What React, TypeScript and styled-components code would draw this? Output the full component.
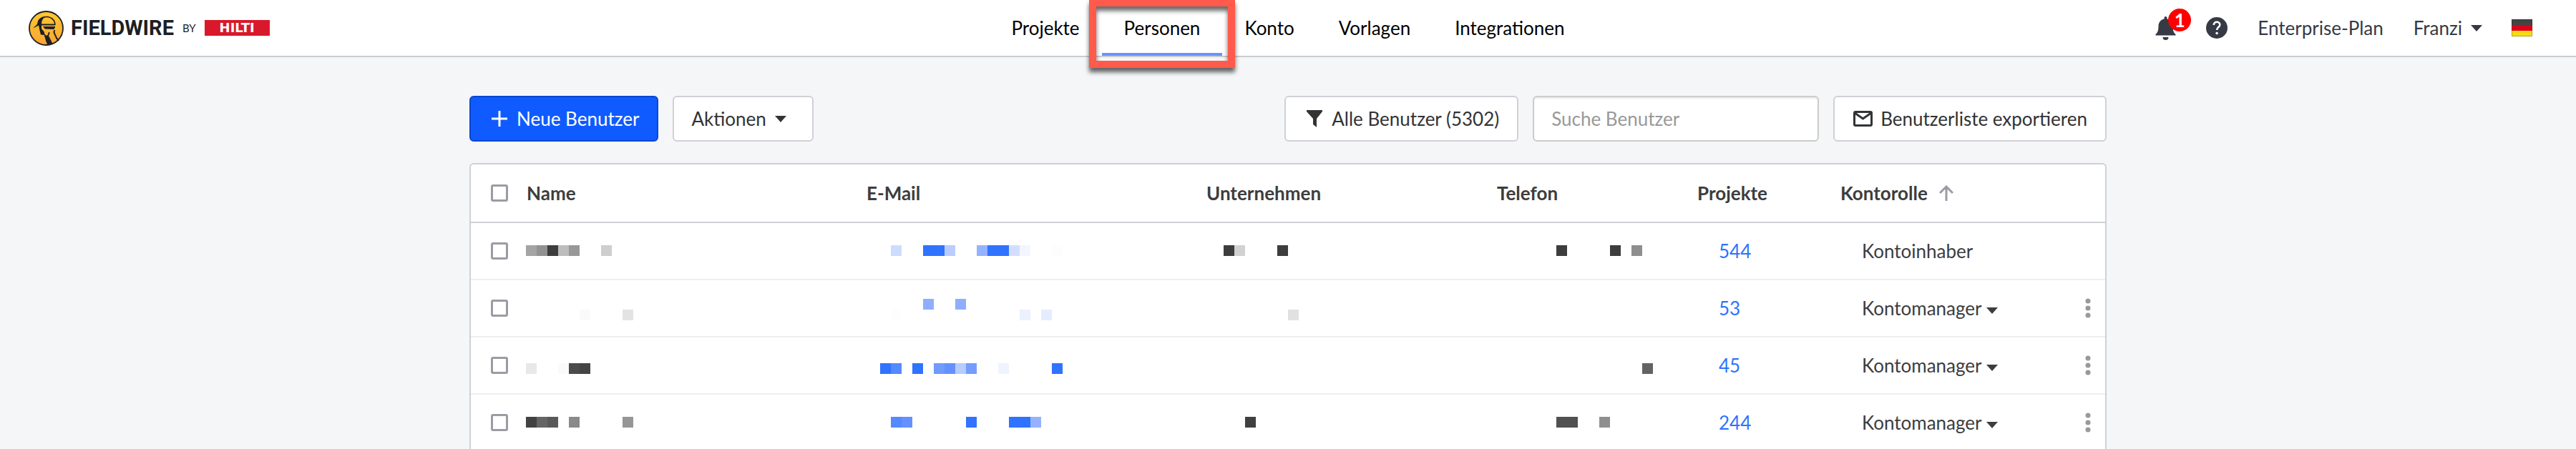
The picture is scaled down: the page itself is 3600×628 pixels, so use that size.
import React from 'react';
import styled, { createGlobalStyle, css } from 'styled-components';

const GlobalStyle = createGlobalStyle`
  *, *::before, *::after { box-sizing: border-box; }
  body {
    margin: 0;
    min-height: 100vh;
    background: #f5f6f8;
    color: #3d3d3d;
    font: 26px/32px Lato, sans-serif;
  }
  button, input, select { font: inherit; color: inherit; }
`;

const TopBar = styled.header`
  display: grid;
  grid-template-columns: 1fr auto 1fr;
  height: 80px;
  background: #fff;
  border-bottom: 2px solid #ccc;
`;

const Brand = styled.a`
  display: flex;
  align-items: center;
  justify-self: start;
  padding-left: 40px;
  color: #1d1f24;
  text-decoration: none;
`;

const BrandName = styled.span`
  margin-left: 10px;
  font: 700 29px/32px Roboto, sans-serif;
`;

const BrandBy = styled.span`
  margin-left: 12px;
  font-size: 15px;
`;

const Parent = styled.span`
  display: flex;
  align-items: center;
  justify-content: center;
  width: 91px;
  height: 22px;
  margin-left: 12px;
  background: #d9182b;
  color: #fff;
  font: 700 18px/22px "DejaVu Sans", sans-serif;
`;

const Nav = styled.nav`
  display: flex;
`;

const Tab = styled.a<{ $active?: boolean }>`
  position: relative;
  padding: 23px 31px 0;
  color: #000;
  text-decoration: none;
  ${(p) =>
    p.$active &&
    css`
      box-shadow: inset 0 -4px #6495ff;
    `}
`;

const Highlight = styled.span`
  position: absolute;
  inset: -1px -18px -17px;
  border: 10px solid #ff5a4b;
  box-shadow: 0 6px 6px rgba(0, 0, 0, 0.6), inset 0 6px 6px rgba(0, 0, 0, 0.6);
  pointer-events: none;
`;

const Account = styled.div`
  display: flex;
  align-items: center;
  justify-self: end;
  padding-right: 60px;
  color: #363a45;
`;

const PlainButton = styled.button`
  position: relative;
  display: flex;
  align-items: center;
  padding: 0;
  border: 0;
  background: none;
  cursor: pointer;
`;

const HelpButton = styled(PlainButton)`
  margin: 0 42px;
`;

const UserButton = styled(PlainButton)`
  gap: 12px;
  margin: 0 40px 0 42px;
`;

const Badge = styled.span`
  position: absolute;
  top: -11px;
  left: 18px;
  width: 32px;
  height: 32px;
  border-radius: 50%;
  background: #f00;
  color: #fff;
  font-weight: 700;
  line-height: 32px;
  text-align: center;
`;

const Main = styled.main`
  max-width: 2288px;
  margin: 0 auto;
  padding-top: 54px;
`;

const Toolbar = styled.div`
  display: flex;
  gap: 20px;
  margin-bottom: 30px;
`;

const Spacer = styled.div`
  flex: 1;
`;

const Button = styled.button<{ $primary?: boolean }>`
  display: flex;
  align-items: center;
  gap: 10px;
  height: 64px;
  padding: 0 25px 0 24px;
  border: 2px solid ${(p) => (p.$primary ? '#0a47d1' : '#d0d1d6')};
  border-radius: 6px;
  background: ${(p) => (p.$primary ? '#0f5bff' : '#fff')};
  color: ${(p) => (p.$primary ? '#fff' : '#323335')};
  cursor: pointer;
`;

const MenuButton = styled(Button)`
  gap: 12px;
  padding-right: 36px;
`;

const Search = styled.input`
  width: 400px;
  height: 64px;
  padding: 0 24px;
  border: 2px solid #ccc;
  border-radius: 6px;
  background: #fff;
  box-shadow: inset 0 2px 2px rgba(0, 0, 0, 0.08);
  &::placeholder { color: #999; opacity: 1; }
`;

const Panel = styled.section`
  border: 2px solid #d0d1d6;
  border-bottom: 0;
  border-radius: 6px 6px 0 0;
  background: #fff;
`;

const Table = styled.table`
  width: 100%;
  table-layout: fixed;
  border-collapse: separate;
  border-spacing: 0;
`;

const Col = styled.col<{ $width?: number }>`
  width: ${(p) => (p.$width ? `${p.$width}px` : 'auto')};
`;

const HeadCell = styled.th`
  height: 82px;
  padding: 0 0 0 1px;
  border-bottom: 2px solid #d0d1d6;
  font-weight: 700;
  text-align: left;
`;

const Cell = styled.td<{ $indent?: boolean }>`
  height: 80px;
  padding: 0 0 0 ${(p) => (p.$indent ? 31 : 0)}px;
  border-bottom: 2px solid #eee;
`;

const CheckHead = styled(HeadCell)`
  padding-left: 28px;
`;

const CheckCell = styled(Cell)`
  padding-left: 28px;
`;

const Sort = styled(PlainButton)`
  gap: 16px;
`;

const Checkbox = styled.input`
  display: block;
  appearance: none;
  width: 24px;
  height: 24px;
  margin: 0;
  border: 3px solid #9b9ca3;
  border-radius: 3px;
  background: #fff;
`;

const ProjectsLink = styled.a`
  color: #2f73ff;
  text-decoration: none;
`;

const Role = styled.div`
  display: flex;
  align-items: center;
  gap: 6px;
  svg { margin-top: 6px; }
`;

const RoleSelect = styled.select`
  appearance: none;
  padding: 0;
  border: 0;
  background: none;
`;

const Kebab = styled(PlainButton)`
  margin: 0 auto;
`;

const Mosaic = styled.svg`
  display: block;
  width: 100%;
  height: 78px;
`;

const Caret = () => (
  <svg width="16" height="9" viewBox="0 0 16 9" fill="currentColor" aria-hidden="true">
    <path d="M0 0h16L8 9z" />
  </svg>
);

const Worker = () => (
  <svg width="49" height="49" viewBox="0 0 49 49" aria-hidden="true">
    <defs>
      <linearGradient id="sun" x1="0" y1="0" x2="0" y2="1">
        <stop offset="0" stopColor="#ffc82e" />
        <stop offset="1" stopColor="#f9a533" />
      </linearGradient>
    </defs>
    <circle cx="24.5" cy="24.5" r="23" fill="url(#sun)" />
    <g fill="#1d1f24">
      <path d="M6.5 24.500C9 21 12 20.500 12.500 16.500 13.500 11 18 8 24 8c-4 2-6 6-6 11v6c2 3 4.500 4 4 7l2.500 3h3.500l2 4 4 8h-8l-2-5-1-4-1-4-5-.500-1.500-6-1.500-7z" />
      <path d="M17 18.500h20v2H17zM20 22h17v1.500l-2 2.500-12-.500z" />
    </g>
    <g fill="none" stroke="#1d1f24">
      <path d="M17 14c2-4 5-5.500 8-5.500 7 0 12 5 12 11.500" strokeWidth="1.600" />
      <path d="M36.500 27c-3 4 1 6 1.500 9 .400 2 2 4 4 6" strokeWidth="2" />
      <path d="M22 35.500c4 1 7-1.500 6.500-5.500" strokeWidth="1.800" />
      <circle cx="24.500" cy="24.500" r="23.500" strokeWidth="1.800" />
    </g>
  </svg>
);

type Block = [x: number, color: string, y?: number];

const Redacted = ({ blocks, y = 31 }: { blocks: Block[]; y?: number }) => (
  <Mosaic aria-hidden="true" shapeRendering="crispEdges">
    {blocks.map(([x, color, top]) => (
      <rect key={`${x}-${top}`} x={x} y={top ?? y} width="15" height="15" fill={color} />
    ))}
  </Mosaic>
);

type User = {
  y: number;
  name: Block[];
  email: Block[];
  company: Block[];
  phone: Block[];
  projects: number;
  owner?: boolean;
};

const BLUE = '#2f73ff';
const DARK = '#3d3d3d';

const users: User[] = [
  {
    y: 31,
    name: [[0, '#a4a4a4'], [15, '#929292'], [30, DARK], [45, '#bdbdbd'], [60, '#989898'], [105, '#cecece']],
    email: [[35, '#ccdcff'], [80, BLUE], [95, BLUE], [110, '#bbccff'], [155, '#95b2ff'], [170, BLUE], [185, BLUE], [200, '#d3deff'], [215, '#f3f6ff'], [260, '#fdfdff']],
    company: [[25, DARK], [40, '#d1d1d1'], [100, DARK]],
    phone: [[84, DARK], [159, DARK], [189, '#8e8e8e']],
    projects: 544,
    owner: true,
  },
  {
    y: 41,
    name: [[75, '#fafafa'], [135, '#e3e3e3']],
    email: [[80, '#8eaeff', 26], [125, '#8eaeff', 26], [35, '#fdfdff'], [215, '#ecf1ff'], [245, '#e6ecff']],
    company: [[115, '#e1e1e1']],
    phone: [],
    projects: 53,
  },
  {
    y: 36,
    name: [[0, '#e8e8e8'], [45, '#fafafa'], [60, '#4b4b4b'], [75, '#444444']],
    email: [[20, BLUE], [35, '#5489ff'], [65, BLUE], [95, '#709bff'], [110, '#6590ff'], [125, '#b7ccff'], [140, '#759dff'], [185, '#eff3ff'], [260, BLUE]],
    company: [],
    phone: [[204, '#636363']],
    projects: 45,
  },
  {
    y: 31,
    name: [[0, '#424242'], [15, '#656565'], [30, '#595959'], [60, '#8a8a8a'], [135, '#969696']],
    email: [[35, '#5489ff'], [50, '#6590ff'], [140, BLUE], [200, BLUE], [215, BLUE], [230, '#95b2ff']],
    company: [[55, '#404040']],
    phone: [[84, '#515151'], [99, '#515151'], [144, '#8f8f8f']],
    projects: 244,
  },
];

export default function App() {
  return (
    <>
      <GlobalStyle />
      <TopBar>
        <Brand href="#">
          <Worker />
          <BrandName>FIELDWIRE</BrandName>
          <BrandBy>BY</BrandBy>
          <Parent>HILTI</Parent>
        </Brand>
        <Nav>
          <Tab href="#projekte">Projekte</Tab>
          <Tab href="#personen" $active>Personen<Highlight /></Tab>
          <Tab href="#konto">Konto</Tab>
          <Tab href="#vorlagen">Vorlagen</Tab>
          <Tab href="#integrationen">Integrationen</Tab>
        </Nav>
        <Account>
          <PlainButton aria-label="Benachrichtigungen">
            <svg width="29" height="33" viewBox="0 0 29 33" fill="currentColor" aria-hidden="true">
              <path d="M12.500 2a2 2 0 0 1 4 0v1.500c5 1 8 5 8 10 0 6 1 9 4 11.500v1.500H.500V25c3-2.500 4-5.500 4-11.500 0-5 3-9 8-10zM10.500 29h8a4 4 0 0 1-8 0z" />
            </svg>
            <Badge>1</Badge>
          </PlainButton>
          <HelpButton aria-label="Hilfe">
            <svg width="30" height="30" viewBox="0 0 30 30" aria-hidden="true">
              <circle cx="15" cy="15" r="15" fill="currentColor" />
              <path d="M10.800 11c0-2.700 1.800-4.200 4.200-4.200s4.300 1.500 4.300 3.800c0 3.400-4.200 3.500-4.200 7.400" fill="none" stroke="#fff" strokeWidth="2.600" />
              <circle cx="15.100" cy="22.500" r="1.800" fill="#fff" />
            </svg>
          </HelpButton>
          <span>Enterprise-Plan</span>
          <UserButton>Franzi<Caret /></UserButton>
          <PlainButton aria-label="Sprache: Deutsch">
            <svg width="31" height="26" viewBox="0 0 31 26" aria-hidden="true">
              <path d="M1 1h29v8H1z" fill="#444" />
              <path d="M1 9h29v8H1z" fill="#e0001a" />
              <path d="M1 17h29v8H1z" fill="#f8dc10" />
              <path d="M1.500 1.500h28v23h-28z" fill="none" stroke="#000" strokeOpacity=".25" />
            </svg>
          </PlainButton>
        </Account>
      </TopBar>
      <Main>
        <Toolbar>
          <Button $primary>
            <svg width="30" height="24" viewBox="0 0 30 24" stroke="currentColor" strokeWidth="3" aria-hidden="true">
              <path d="M16 1v22M5 12h22" />
            </svg>
            Neue Benutzer
          </Button>
          <MenuButton>Aktionen<Caret /></MenuButton>
          <Spacer />
          <Button>
            <svg width="30" height="28" viewBox="0 0 30 28" fill="currentColor" aria-hidden="true">
              <path d="M5 2h22v2l-8 10v12l-5-4v-8L5 4z" />
            </svg>
            Alle Benutzer (5302)
          </Button>
          <Search aria-label="Suche Benutzer" placeholder="Suche Benutzer" />
          <Button>
            <svg width="30" height="24" viewBox="0 0 30 24" fill="none" stroke="currentColor" strokeWidth="3" aria-hidden="true">
              <rect x="3.500" y="2.500" width="24" height="19" rx="1.500" />
              <path d="M4 4l11.500 8L27 4" />
            </svg>
            Benutzerliste exportieren
          </Button>
        </Toolbar>
        <Panel>
          <Table>
            <colgroup>
              <Col $width={77} />
              <Col />
              <Col />
              <Col $width={406} />
              <Col $width={280} />
              <Col $width={200} />
              <Col $width={323} />
              <Col $width={48} />
            </colgroup>
            <thead>
              <tr>
                <CheckHead><Checkbox type="checkbox" aria-label="Alle auswählen" /></CheckHead>
                <HeadCell>Name</HeadCell>
                <HeadCell>E-Mail</HeadCell>
                <HeadCell>Unternehmen</HeadCell>
                <HeadCell>Telefon</HeadCell>
                <HeadCell>Projekte</HeadCell>
                <HeadCell>
                  <Sort>
                    Kontorolle
                    <svg width="20" height="22" viewBox="0 0 20 22" fill="none" stroke="#9b9ca3" strokeWidth="3" aria-hidden="true">
                      <path d="M10 22V2M1 11l9-9 9 9" />
                    </svg>
                  </Sort>
                </HeadCell>
                <HeadCell />
              </tr>
            </thead>
            <tbody>
              {users.map((u) => (
                <tr key={u.projects}>
                  <CheckCell><Checkbox type="checkbox" aria-label="Benutzer auswählen" /></CheckCell>
                  <Cell><Redacted blocks={u.name} y={u.y} /></Cell>
                  <Cell><Redacted blocks={u.email} y={u.y} /></Cell>
                  <Cell><Redacted blocks={u.company} y={u.y} /></Cell>
                  <Cell><Redacted blocks={u.phone} y={u.y} /></Cell>
                  <Cell $indent><ProjectsLink href="#projekte">{u.projects}</ProjectsLink></Cell>
                  <Cell $indent>
                    {u.owner ? (
                      'Kontoinhaber'
                    ) : (
                      <Role>
                        <RoleSelect aria-label="Kontorolle"><option>Kontomanager</option></RoleSelect>
                        <Caret />
                      </Role>
                    )}
                  </Cell>
                  <Cell>
                    {!u.owner && (
                      <Kebab aria-label="Weitere Aktionen">
                        <svg width="8" height="28" viewBox="0 0 8 28" fill="#999" aria-hidden="true">
                          <circle cx="4" cy="4" r="3.500" />
                          <circle cx="4" cy="14" r="3.500" />
                          <circle cx="4" cy="24" r="3.500" />
                        </svg>
                      </Kebab>
                    )}
                  </Cell>
                </tr>
              ))}
            </tbody>
          </Table>
        </Panel>
      </Main>
    </>
  );
}
